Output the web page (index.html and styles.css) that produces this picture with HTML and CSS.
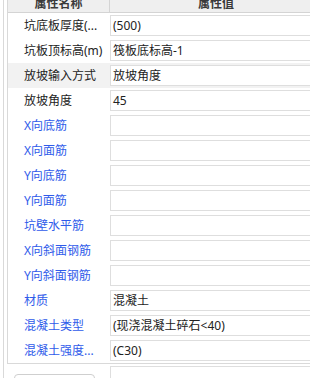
FILE: index.html
```html
<!DOCTYPE html>
<html lang="zh-CN">
<head>
<meta charset="utf-8">
<link rel="stylesheet" href="styles.css">
</head>
<body>
<div class="frame">
  <div class="panel">
    <div class="head">
      <div class="hc hn">属性名称</div>
      <div class="hc hv">属性值</div>
    </div>
    <div class="row"><div class="lab">坑底板厚度(...</div><div class="val">(500)</div></div>
    <div class="row"><div class="lab">坑板顶标高(m)</div><div class="val">筏板底标高-1</div></div>
    <div class="row sel"><div class="lab">放坡输入方式</div><div class="val">放坡角度</div></div>
    <div class="row"><div class="lab">放坡角度</div><div class="val">45</div></div>
    <div class="row"><div class="lab blue">X向底筋</div><div class="val"></div></div>
    <div class="row"><div class="lab blue">X向面筋</div><div class="val"></div></div>
    <div class="row"><div class="lab blue">Y向底筋</div><div class="val"></div></div>
    <div class="row"><div class="lab blue">Y向面筋</div><div class="val"></div></div>
    <div class="row"><div class="lab blue">坑壁水平筋</div><div class="val"></div></div>
    <div class="row"><div class="lab blue">X向斜面钢筋</div><div class="val"></div></div>
    <div class="row"><div class="lab blue">Y向斜面钢筋</div><div class="val"></div></div>
    <div class="row"><div class="lab blue">材质</div><div class="val">混凝土</div></div>
    <div class="row"><div class="lab blue">混凝土类型</div><div class="val">(现浇混凝土碎石&lt;40)</div></div>
    <div class="row"><div class="lab blue">混凝土强度...</div><div class="val">(C30)</div></div>
  </div>
  <div class="foot">
    <div class="fl"><div class="btn"></div></div>
    <div class="val"></div>
  </div>
</div>
</body>
</html>
```

FILE: styles.css
```css
html, body {
  margin: 0;
  padding: 0;
  overflow: hidden;
  background: #ffffff;
}
body {
  width: 310px;
  height: 378px;
  font-family: "Noto Sans", "Noto Sans CJK SC", sans-serif;
  font-size: 12px;
  color: #222222;
}
.frame {
  margin-left: 3px;
  margin-top: -4px;
  width: 318px;
  height: 400px;
  border-left: 1px solid #d9d9d9;
}
.panel {
  margin-left: 3px;
  border-left: 1px solid #d9d9d9;
  border-bottom: 1px solid #d9d9d9;
}
.head {
  display: grid;
  grid-template-columns: 102px 1fr;
  height: 16px;
  background: #efefef;
  border-bottom: 1px solid #d4d4d4;
}
.hc {
  line-height: 16px;
  text-align: center;
  font-weight: bold;
  color: #3a3a3a;
  white-space: nowrap;
}
.hn {
  border-right: 1px solid #d4d4d4;
}
.row {
  display: grid;
  grid-template-columns: 102px 1fr;
  height: 25px;
}
.row.sel {
  background: #f2f2f2;
}
.lab {
  padding-left: 16px;
  line-height: 25px;
  white-space: nowrap;
  overflow: hidden;
  color: #222222;
}
.lab.blue {
  color: #2f5bea;
}
.val {
  margin: 2px 0;
  height: 19px;
  border: 1px solid #dedede;
  padding-left: 2px;
  line-height: 19px;
  background: #ffffff;
  white-space: nowrap;
  overflow: hidden;
  color: #222222;
}
.foot {
  display: grid;
  grid-template-columns: 106px 1fr;
}
.btn {
  margin: 10px 0 0 10px;
  width: 79px;
  height: 20px;
  border: 1px solid #cfcfcf;
  border-radius: 4px;
  background: #ffffff;
}
```
